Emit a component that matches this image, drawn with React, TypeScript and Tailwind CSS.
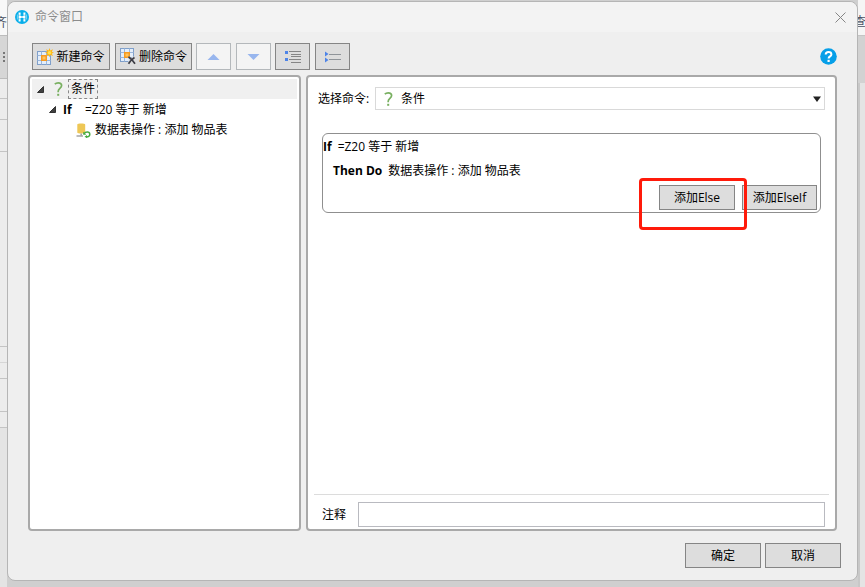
import React from "react";

const buttonClass =
  "flex items-center justify-center border border-[#858585] bg-[#dddddd] text-xs text-black whitespace-nowrap hover:bg-[#d0e4f5]";
const disabledClass =
  "flex h-[27px] w-[35px] items-center justify-center border border-[#b4b8bb] bg-[#f4f4f4]";

function LogoIcon() {
  return (
    <svg width="14" height="14" viewBox="0 0 14 14" aria-hidden="true">
      <circle cx="7" cy="7" r="7" fill="#08aeea" />
      <path d="M4.6 2.4v9.2M9.4 2.4v9.2M4.6 7h4.8" stroke="#fff" strokeWidth="2" fill="none" />
      <path d="M2 5.2h10M2 8.8h10M7 2v10" stroke="#08aeea" strokeWidth="0.5" />
      <path d="M2.4 4.5v5M11.6 4.5v5" stroke="#9bdcf5" strokeWidth="0.8" />
    </svg>
  );
}

function GridBase() {
  return (
    <>
      <rect x="0.5" y="0.5" width="13" height="13" fill="#e4eefa" stroke="#7f9fca" />
      <path d="M4.5.5v13M9.5.5v13M.5 4.5h13M.5 9.5h13" stroke="#9ab6db" fill="none" />
      <rect x="4" y="4" width="6" height="6" fill="#f59a23" />
      <rect x="5.5" y="5.5" width="3" height="3" fill="#ffc45c" />
    </>
  );
}

function NewIcon() {
  return (
    <svg width="17" height="17" viewBox="0 0 17 17" aria-hidden="true">
      <g transform="translate(0 3)">
        <GridBase />
      </g>
      <path
        d="M12.5 0l.8 2.5L16 1.3l-1.2 2.5 2.2.9-2.3.9L16 8l-2.6-1-.9 2.3-.9-2.3L9 8l1.3-2.4L8 4.7l2.3-.9L9.1 1.3l2.5 1.2z"
        fill="#ffb514"
      />
      <circle cx="12.5" cy="4.7" r="1.8" fill="#ffe24d" />
    </svg>
  );
}

function DeleteIcon() {
  return (
    <svg width="17" height="17" viewBox="0 0 17 17" aria-hidden="true">
      <GridBase />
      <path d="M8.5 9l6 6.5M14.3 9.3l-5.5 6" stroke="#ddd" strokeWidth="3" />
      <path
        d="M8.5 8.8c2 1.5 4.5 4 6.5 7M14.5 9.5c-2.5 1.5-4.3 3.5-6 6.3"
        stroke="#3c3c44"
        strokeWidth="1.7"
        fill="none"
      />
    </svg>
  );
}

function QuestionIcon() {
  return (
    <svg width="9" height="14" viewBox="0 0 9 14" aria-hidden="true">
      <path
        d="M.8 2.2C1.8 1.2 3 .9 4.2.9c2 0 3.4 1 3.4 2.7 0 2.6-3.4 3-3.4 5.6v1"
        fill="none"
        stroke="#79b061"
        strokeWidth="1.7"
      />
      <rect x="3.2" y="11.8" width="2" height="2" fill="#79b061" />
    </svg>
  );
}

function ExpandedIcon() {
  return (
    <svg width="7" height="7" viewBox="0 0 7 7" aria-hidden="true">
      <path d="M6.5.5v6h-6z" fill="#404040" stroke="#333" />
    </svg>
  );
}

function DataIcon() {
  return (
    <svg width="15" height="15" viewBox="0 0 15 15" aria-hidden="true">
      <path d="M1.3 1.5C1.3.2 9.2.2 9.2 1.5v8c0 1.300-7.900 1.300-7.900 0z" fill="#eec756" />
      <path d="M5.2 10.5V13M.5 13h6.5" stroke="#a5a5a5" strokeWidth="1.6" />
      <path
        d="M8.3 10.8C9 8.8 13.5 8 13.8 11.2c0 2-1.7 3-3.8 2.8"
        fill="none"
        stroke="#45ab3e"
        strokeWidth="1.5"
      />
      <path d="M7.2 8.8v3h3zM11 12v3L8.5 13.8z" fill="#45ab3e" />
    </svg>
  );
}

function ListIcon({ dense }: { dense?: boolean }) {
  return (
    <svg width="18" height="14" viewBox="0 0 18 14" aria-hidden="true">
      {dense ? (
        <>
          <path d="M1 1h3v3H1zM1 8h3v3H1z" fill="#4d84e8" />
          <path d="M5 1.5h12M7 4.5h10M7 6.5h10M5 9.5h12M7 12.5h10" stroke="#858585" />
        </>
      ) : (
        <>
          <path d="M1 1.5L4.5 4 1 6.5zM1 7.500L4.5 10 1 12.5z" fill="#4d84e8" />
          <path d="M5 4.5h12M5 9.5h12" stroke="#8f9499" />
        </>
      )}
    </svg>
  );
}

function TitleBar() {
  return (
    <header className="flex h-[30px] items-center rounded-t-lg bg-[#f3f3f3] pl-[7px] pr-[11px]">
      <LogoIcon />
      <h1 className="ml-1.5 flex-1 text-xs text-[#8c8c8c]">命令窗口</h1>
      <button type="button" aria-label="关闭">
        <svg width="11" height="11" viewBox="0 0 11 11">
          <path d="M.5.5l10 10M10.5.5l-10 10" stroke="#858585" fill="none" />
        </svg>
      </button>
    </header>
  );
}

function Toolbar() {
  return (
    <div className="flex h-[27px] items-center pl-1">
      <button type="button" className={`${buttonClass} h-[27px] w-[78px] gap-0.5`}>
        <NewIcon />
        新建命令
      </button>
      <button type="button" className={`${buttonClass} ml-[5px] h-[27px] w-[77px] gap-0.5`}>
        <DeleteIcon />
        删除命令
      </button>
      <button type="button" disabled aria-label="上移" className={`${disabledClass} ml-1`}>
        <svg width="13" height="6" viewBox="0 0 12 6">
          <path d="M0 6l6-6 6 6z" fill="#98b6ee" />
        </svg>
      </button>
      <button type="button" disabled aria-label="下移" className={`${disabledClass} ml-[5px]`}>
        <svg width="13" height="6" viewBox="0 0 12 6">
          <path d="M0 0l6 6 6-6z" fill="#98b6ee" />
        </svg>
      </button>
      <button type="button" aria-label="展开" className={`${buttonClass} ml-1 h-[27px] w-[35px]`}>
        <ListIcon dense />
      </button>
      <button type="button" aria-label="折叠" className={`${buttonClass} ml-[5px] h-[27px] w-[35px]`}>
        <ListIcon />
      </button>
      <button type="button" aria-label="帮助" className="ml-auto">
        <svg width="17" height="17" viewBox="0 0 17 17">
          <circle cx="8.5" cy="8.5" r="8.3" fill="#069fe8" />
          <path
            d="M5.7 6.5C5.7 4.7 7 4 8.5 4s2.9.8 2.9 2.4c0 2-2.8 1.9-2.8 4"
            fill="none"
            stroke="#fff"
            strokeWidth="2"
          />
          <rect x="7.5" y="11.8" width="2.2" height="2.2" fill="#fff" />
        </svg>
      </button>
    </div>
  );
}

function CommandTree() {
  return (
    <div className="w-[273px] shrink-0 rounded-sm border-2 border-[#a9a9a9] bg-white p-0.5">
      <ul role="tree" className="text-xs">
        <li role="treeitem" aria-expanded="true">
          <div className="flex h-5 items-center bg-[#f0f0f0] pl-[5px]">
            <ExpandedIcon />
            <span className="ml-[10px]">
              <QuestionIcon />
            </span>
            <span className="ml-[5px] flex h-5 items-center border border-dashed border-[#8a8a8a] px-0.5">条件</span>
          </div>
          <ul role="group">
            <li role="treeitem" aria-expanded="true">
              <div className="flex h-[21px] items-center pl-[17px]">
                <ExpandedIcon />
                <span className="ml-[7px] w-[22px] font-bold">If</span>
                <span>=Z20 等于 新增</span>
              </div>
              <ul role="group">
                <li role="treeitem" className="flex h-5 items-center gap-1 pl-11">
                  <DataIcon />
                  <span>数据表操作 : 添加 物品表</span>
                </li>
              </ul>
            </li>
          </ul>
        </li>
      </ul>
    </div>
  );
}

function CommandDetail() {
  return (
    <div className="flex min-w-0 flex-1 flex-col rounded-sm border-2 border-[#a9a9a9] bg-white px-1.5 pb-0.5">
      <div className="flex items-center px-1 pt-[10px]">
        <label htmlFor="command" className="w-[57px] shrink-0 text-xs">
          选择命令:
        </label>
        <div className="relative flex-1">
          <select
            id="command"
            defaultValue="condition"
            className="block h-[23px] w-full appearance-none border border-[#d9d9d9] bg-white pl-[25px] pr-5 text-xs"
          >
            <option value="condition">条件</option>
          </select>
          <span className="pointer-events-none absolute inset-y-0 left-[9px] flex items-center">
            <QuestionIcon />
          </span>
          <span className="pointer-events-none absolute inset-y-0 right-1 flex items-center">
            <svg width="8" height="6" viewBox="0 0 8 6">
              <path d="M0 .5h8L4 6z" fill="#222" />
            </svg>
          </span>
        </div>
      </div>

      <div className="mx-2 mt-[23px] flex flex-col rounded-md border border-[#8f8f8f] pb-0.5 pr-[3px] pt-0.5 text-xs">
        <p className="flex h-[21px] items-center gap-1.5">
          <b>If</b>
          <span>=Z20 等于 新增</span>
        </p>
        <p className="flex h-7 items-center gap-1.5 pl-[10px]">
          <b>Then Do</b>
          <span>数据表操作 : 添加 物品表</span>
        </p>
        <div className="flex justify-end gap-[7px]">
          <div className="relative">
            <button type="button" className={`${buttonClass} h-[25px] w-[76px]`}>
              添加Else
            </button>
            <span className="pointer-events-none absolute -bottom-5 -left-5 -right-3 -top-[7px] z-10 rounded-sm border-3 border-[#ff1a0a]" />
          </div>
          <button type="button" className={`${buttonClass} h-[25px] w-[75px]`}>
            添加ElseIf
          </button>
        </div>
      </div>

      <div className="mt-auto flex items-center border-t border-[#dcdcdc] pl-2 pr-1 pt-[7px]">
        <label htmlFor="remark" className="w-9 shrink-0 text-xs">
          注释
        </label>
        <input
          id="remark"
          type="text"
          className="h-[25px] min-w-0 flex-1 border border-[#b9bac0] bg-white px-1 text-xs outline-none"
        />
      </div>
    </div>
  );
}

function LeftEdge() {
  return (
    <div className="flex w-[7px] shrink-0 flex-col overflow-hidden bg-[#ececec]">
      <div className="flex h-[35px] items-end justify-end bg-[#f8f8f8] pb-1 text-xs text-[#4b5263]">齐</div>
      <div className="flex h-11 flex-col items-center justify-center gap-0.5 border-y border-[#bcbcbc] bg-[#d6d6d6]">
        <i className="size-0.5 bg-[#777]" />
        <i className="size-0.5 bg-[#777]" />
        <i className="size-0.5 bg-[#777]" />
      </div>
      <div className="h-5 border-b border-[#c4c4c4]" />
      <div className="h-[21px] border-b border-[#c4c4c4]" />
      <div className="h-8 border-b border-[#c4c4c4]" />
      <div className="h-[195px] border-b border-[#c4c4c4]" />
      <div className="h-4 border-b border-[#d6d6d6]" />
      <div className="h-4 border-b border-[#c4c4c4]" />
      <div className="h-[33px] border-b border-[#c4c4c4]" />
      <div className="h-4 border-b border-[#c4c4c4]" />
      <div className="flex-1 bg-[#e4e4e4]" />
    </div>
  );
}

function RightEdge() {
  return (
    <div className="flex w-[7px] shrink-0 flex-col overflow-hidden">
      <div className="flex h-[30px] items-end whitespace-nowrap bg-[#f5f5f5] text-xs text-[#4b5263]">
        <span className="-ml-1">查找</span>
      </div>
      <div className="h-[5px] bg-[#f5f5f5]" />
      <div className="h-12 border-t border-[#c4c4c4] bg-[#d2d2d2]" />
      <div className="flex-1 border-l-2 border-[#c8c8c8] bg-[#e4e4e4]" />
    </div>
  );
}

export default function App() {
  return (
    <div className="flex min-h-screen bg-[#cfcfcf] font-['Open_Sans','Noto_Sans_CJK_SC',sans-serif] text-black">
      <LeftEdge />
      <div className="flex min-w-0 flex-1 pb-1.5 pt-px">
        <main className="flex min-w-0 flex-1 flex-col rounded-lg border border-[#b5b5b5] bg-[#efefef]">
          <TitleBar />
          <div className="flex flex-1 flex-col px-5 pb-3 pt-[11px]">
            <Toolbar />
            <div className="mt-[5px] flex flex-1 gap-[5px]">
              <CommandTree />
              <CommandDetail />
            </div>
            <footer className="-mr-1 mt-3 flex justify-end gap-1">
              <button type="button" className={`${buttonClass} h-[25px] w-[76px]`}>
                确定
              </button>
              <button type="button" className={`${buttonClass} h-[25px] w-[76px]`}>
                取消
              </button>
            </footer>
          </div>
        </main>
      </div>
      <RightEdge />
    </div>
  );
}
